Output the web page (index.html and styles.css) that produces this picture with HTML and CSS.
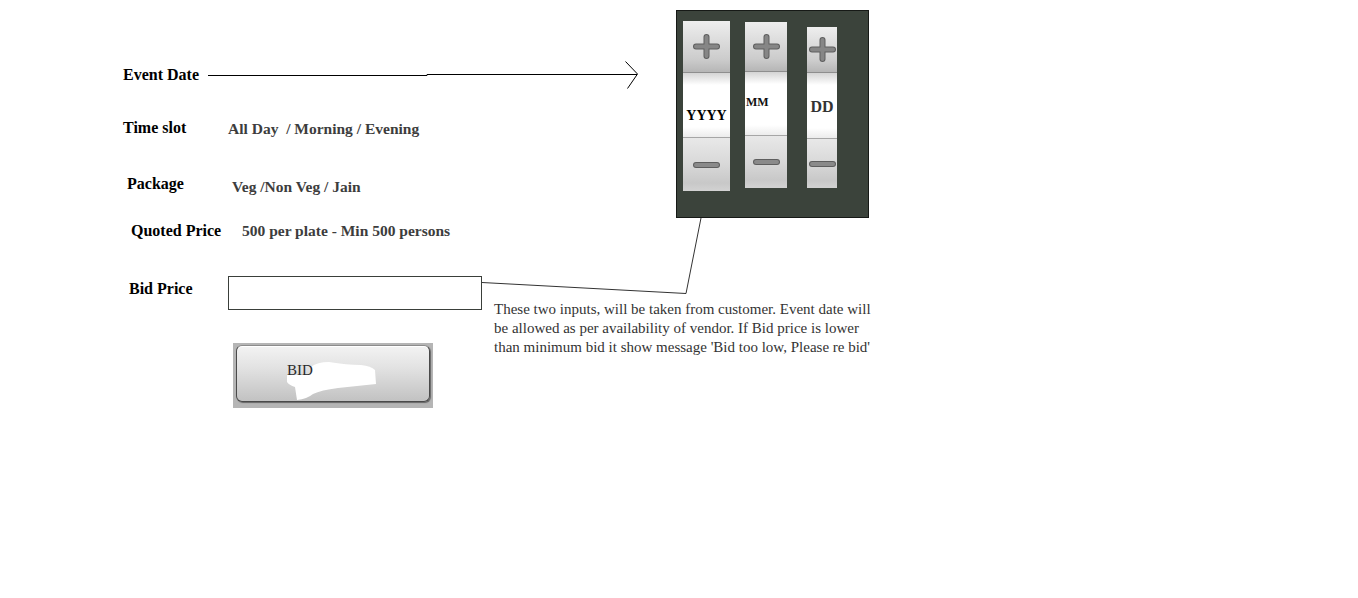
FILE: index.html
```html
<!DOCTYPE html>
<html lang="en">
<head>
    <meta charset="UTF-8">
    <title>Event Bid</title>
    <link rel="stylesheet" href="styles.css">
</head>
<body>
    <div class="page">
        <div class="form">
            <div class="row row--date">
                <span class="label">Event Date</span>
            </div>
            <div class="row row--slot">
                <span class="label">Time slot</span>
                <span class="value">All Day &nbsp;/ Morning / Evening</span>
            </div>
            <div class="row row--package">
                <span class="label">Package</span>
                <span class="value">Veg /Non Veg / Jain</span>
            </div>
            <div class="row row--quoted">
                <span class="label">Quoted Price</span>
                <span class="value">500 per plate - Min 500 persons</span>
            </div>
            <div class="row row--bid">
                <label class="label" for="bidPrice">Bid Price</label>
                <input type="text" id="bidPrice" class="bid-input">
            </div>
            <div class="bid-frame">
                <button class="bid-btn">
                    <svg class="blob" width="150" height="56" viewBox="0 0 150 56">
                        <path d="M74 21 Q80 16 92 16 Q110 19 124 19 Q134 20 138 24 L139 38 Q120 40 101 42 Q84 44 76 48 Q70 53 60 54 L58 41 Q52 39 50 36 L50 29 L74 29 Z" fill="#fff"/>
                    </svg>
                    <span class="bid-text">BID</span>
                </button>
            </div>
        </div>

        <div class="aside">
            <div class="picker">
                <div class="spin spin--year">
                    <div class="spin-up">
                        <svg width="27" height="25" viewBox="0 0 27 25">
                            <g fill="#5e5e5e"><rect x="0" y="9.5" width="27" height="6" rx="3"/><rect x="10.5" y="0" width="6" height="25" rx="3"/></g>
                            <g fill="#868686"><rect x="1" y="10.5" width="25" height="4" rx="2"/><rect x="11.5" y="1" width="4" height="23" rx="2"/></g>
                        </svg>
                    </div>
                    <div class="spin-val">YYYY</div>
                    <div class="spin-down">
                        <svg width="27" height="6" viewBox="0 0 27 6"><rect x="0" y="0" width="27" height="6" rx="3" fill="#5e5e5e"/><rect x="1" y="1" width="25" height="4" rx="2" fill="#8a8a8a"/></svg>
                    </div>
                </div>
                <div class="spin spin--month">
                    <div class="spin-up">
                        <svg width="27" height="25" viewBox="0 0 27 25">
                            <g fill="#5e5e5e"><rect x="0" y="9.5" width="27" height="6" rx="3"/><rect x="10.5" y="0" width="6" height="25" rx="3"/></g>
                            <g fill="#868686"><rect x="1" y="10.5" width="25" height="4" rx="2"/><rect x="11.5" y="1" width="4" height="23" rx="2"/></g>
                        </svg>
                    </div>
                    <div class="spin-val">MM</div>
                    <div class="spin-down">
                        <svg width="27" height="6" viewBox="0 0 27 6"><rect x="0" y="0" width="27" height="6" rx="3" fill="#5e5e5e"/><rect x="1" y="1" width="25" height="4" rx="2" fill="#8a8a8a"/></svg>
                    </div>
                </div>
                <div class="spin spin--day">
                    <div class="spin-up">
                        <svg width="27" height="25" viewBox="0 0 27 25">
                            <g fill="#5e5e5e"><rect x="0" y="9.5" width="27" height="6" rx="3"/><rect x="10.5" y="0" width="6" height="25" rx="3"/></g>
                            <g fill="#868686"><rect x="1" y="10.5" width="25" height="4" rx="2"/><rect x="11.5" y="1" width="4" height="23" rx="2"/></g>
                        </svg>
                    </div>
                    <div class="spin-val">DD</div>
                    <div class="spin-down">
                        <svg width="27" height="6" viewBox="0 0 27 6"><rect x="0" y="0" width="27" height="6" rx="3" fill="#5e5e5e"/><rect x="1" y="1" width="25" height="4" rx="2" fill="#8a8a8a"/></svg>
                    </div>
                </div>
            </div>
            <p class="note">These two inputs, will be taken from customer. Event date will<br>be allowed as per availability of vendor. If Bid price is lower<br>than minimum bid it show message 'Bid too low, Please re bid'</p>
        </div>

        <!-- hand-drawn annotation lines -->
        <svg class="annotations" width="1358" height="598" viewBox="0 0 1358 598">
            <polyline points="208,75.5 427,75.5 427,74.5 637,74.5" fill="none" stroke="#000" stroke-width="1"/>
            <polyline points="625.5,61.5 637.5,74 627.5,88.5" fill="none" stroke="#000" stroke-width="1"/>
            <polyline points="482,282.5 686,293.5 701,218" fill="none" stroke="#333" stroke-width="1"/>
        </svg>
    </div>
</body>
</html>
```

FILE: styles.css
```css
html, body {
    margin: 0;
    padding: 0;
    background-color: #fff;
}
body {
    font-family: "Liberation Serif", "Times New Roman", serif;
    color: #000;
    overflow: hidden;
}
.page {
    position: relative;
    display: flex;
    align-items: flex-start;
    width: 1358px;
    height: 598px;
}
.form {
    width: 494px;
    flex: none;
    padding-top: 66px;
}
.row {
    display: flex;
    align-items: flex-start;
}
.label {
    flex: none;
    font-size: 16px;
    line-height: 18px;
    font-weight: bold;
    color: #000;
}
.value {
    font-size: 15.5px;
    line-height: 18px;
    font-weight: bold;
    color: #3d3d3d;
    white-space: nowrap;
}
.row--date {
    padding-left: 123px;
}
.row--slot {
    margin-top: 35px;
    padding-left: 123px;
}
.row--slot .label {
    width: 105px;
}
.row--slot .value {
    margin-top: 1px;
}
.row--package {
    margin-top: 37px;
    padding-left: 127px;
}
.row--package .label {
    width: 105px;
}
.row--package .value {
    margin-top: 3px;
}
.row--quoted {
    margin-top: 26px;
    padding-left: 131px;
}
.row--quoted .label {
    width: 111px;
}
.row--quoted .value {
    margin-top: 0;
}
.row--bid {
    margin-top: 36px;
    padding-left: 129px;
}
.row--bid .label {
    width: 99px;
    margin-top: 4px;
}
.bid-input {
    width: 254px;
    height: 34px;
    box-sizing: border-box;
    margin: 0;
    padding: 0 6px;
    border: 1px solid #3a3f3a;
    background-color: #fff;
    font-family: inherit;
    font-size: 15px;
}
.bid-frame {
    width: 200px;
    height: 65px;
    box-sizing: border-box;
    margin: 33px 0 0 233px;
    padding: 2px 0 0 3px;
    background-color: #b5b5b5;
}
.bid-btn {
    position: relative;
    display: block;
    width: 194px;
    box-sizing: border-box;
    margin: 0;
    padding: 15px 0 22px 50px;
    border: 1px solid #4a4a4a;
    border-top-color: #8c8c8c;
    border-radius: 6px;
    background: linear-gradient(#f3f3f3, #e2e2e2 40%, #cacaca 85%, #c2c2c2);
    box-shadow: inset 0 1px 0 #fff, 1px 1px 1px #666;
    text-align: left;
    font-family: inherit;
    font-size: 15px;
    line-height: 18px;
    color: #2a2a2a;
    cursor: pointer;
}
.blob {
    position: absolute;
    left: 0;
    top: 0;
}
.bid-text {
    position: relative;
    z-index: 1;
}
.aside {
    flex: none;
}
.picker {
    display: flex;
    align-items: flex-start;
    width: 193px;
    height: 208px;
    box-sizing: border-box;
    margin: 10px 0 0 182px;
    border: 1px solid #161916;
    background-color: #3b433b;
}
.spin {
    display: flex;
    flex-direction: column;
    flex: none;
    box-shadow: inset 2px 0 2px rgba(0, 0, 0, 0.08), inset -2px 0 2px rgba(0, 0, 0, 0.08);
}
.spin-up,
.spin-down {
    display: flex;
    align-items: center;
    justify-content: center;
    box-sizing: border-box;
}
.spin-up {
    border-bottom: 1px solid #8e8e8e;
    background: linear-gradient(#eeeeee, #dedede 35%, #cccccc 75%, #b6b6b6);
}
.spin-down {
    border-top: 1px solid #a6a6a6;
    background: linear-gradient(#e8e8e8, #d8d8d8 50%, #c8c8c8 85%, #d2d2d2);
}
.spin-val {
    box-sizing: border-box;
    background: linear-gradient(#d4d4d4, #fff 12px, #fff calc(100% - 10px), #ececec);
    text-align: center;
    font-weight: bold;
    white-space: nowrap;
}
.spin--year {
    width: 47px;
    margin: 10px 0 0 6px;
}
.spin--year .spin-up { height: 52px; }
.spin--year .spin-val {
    height: 64px;
    padding-top: 35px;
    font-size: 14px;
    line-height: 16px;
    color: #000;
}
.spin--year .spin-down { height: 54px; }
.spin--month {
    width: 42px;
    margin: 11px 0 0 15px;
}
.spin--month .spin-up { height: 50px; }
.spin--month .spin-val {
    height: 63px;
    padding: 23px 0 0 1px;
    text-align: left;
    font-size: 12px;
    line-height: 14px;
    color: #111;
}
.spin--month .spin-down { height: 53px; }
.spin--day {
    width: 30px;
    margin: 16px 0 0 20px;
}
.spin--day .spin-up { height: 46px; }
.spin--day .spin-val {
    height: 65px;
    padding-top: 25px;
    font-size: 16px;
    line-height: 18px;
    color: #333;
}
.spin--day .spin-down { height: 50px; }
.note {
    margin: 82px 0 0 0;
    font-size: 15px;
    line-height: 19px;
    color: #333;
    white-space: nowrap;
}
.annotations {
    position: absolute;
    left: 0;
    top: 0;
    pointer-events: none;
}
```
